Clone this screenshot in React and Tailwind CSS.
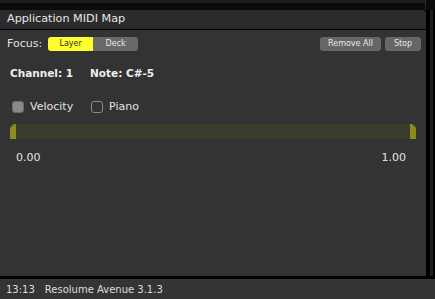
import React from 'react';

const Checkbox = ({ checked }) => (
  <span
    className={`w-[12px] h-[12px] rounded-[3px] border ${
      checked ? 'bg-[#8a8a8a] border-[#6c6c6c]' : 'bg-transparent border-[#8a8a8a]'
    }`}
  />
);

const Handle = ({ side }) => (
  <svg width="6" height="15" viewBox="0 0 6 15" className="block">
    {side === 'left' ? (
      <polygon points="0,4 4,0 6,0 6,15 0,15" fill="#8d8b1d" />
    ) : (
      <polygon points="0,0 2,0 6,4 6,15 0,15" fill="#8d8b1d" />
    )}
  </svg>
);

export default function App() {
  return (
    <div
      className="w-[435px] h-[299px] bg-[#0b0b0b] flex flex-col overflow-hidden text-[#e2e2e2]"
      style={{ fontFamily: '"DejaVu Sans", "Open Sans", sans-serif' }}
    >
      {/* top strip */}
      <div className="h-[10px] flex">
        <div className="w-[425px] h-[3px] bg-[#1d1d1d]" />
        <div className="w-[1px] h-[10px] bg-[#2a2a2a]" />
        <div className="flex-1" />
      </div>

      <div className="flex h-[266px]">
        {/* MIDI map panel */}
        <div className="w-[426px] flex flex-col">
          <div className="h-[20px] bg-[#2b2b2b] rounded-tr-[4px] flex items-center px-[7px] text-[11.2px] text-[#e6e6e6] border-b border-black">
            Application MIDI Map
          </div>
          <div className="flex-1 bg-[#333333] flex flex-col">
            {/* focus row */}
            <div className="flex items-center pl-[7px] pr-[5px] pt-[7px] h-[21px]">
              <span className="text-[11px] mr-[6px]">Focus:</span>
              <div className="flex h-[14px] rounded-[3px] overflow-hidden text-[8px]">
                <span className="w-[45px] bg-[#ffff2e] text-[#2a2a2a] flex items-center justify-center">Layer</span>
                <span className="w-[45px] bg-[#696969] text-[#e8e8e8] flex items-center justify-center">Deck</span>
              </div>
              <div className="flex-1" />
              <span className="w-[61px] h-[14px] rounded-[3px] bg-[#666666] text-[8px] text-[#e8e8e8] flex items-center justify-center">Remove All</span>
              <span className="w-[36px] h-[14px] rounded-[3px] bg-[#666666] text-[8px] text-[#e8e8e8] flex items-center justify-center ml-[4px]">Stop</span>
            </div>

            {/* channel / note */}
            <div className="flex items-center pl-[10px] mt-[16px] h-[14px] text-[10.5px] font-bold text-[#eeeeee]">
              <span className="w-[80px]">Channel: 1</span>
              <span>Note: C#-5</span>
            </div>

            {/* checkboxes */}
            <div className="flex items-center pl-[12px] mt-[19px] h-[14px] text-[11px]">
              <Checkbox checked />
              <span className="ml-[6px] w-[61px]">Velocity</span>
              <Checkbox />
              <span className="ml-[6px]">Piano</span>
            </div>

            {/* range slider */}
            <div className="mx-[10px] mt-[10px] h-[15px] bg-[#3c3c2d] flex justify-between">
              <Handle side="left" />
              <Handle side="right" />
            </div>

            <div className="flex justify-between pl-[16px] pr-[20px] mt-[11px] text-[11px]">
              <span>0.00</span>
              <span>1.00</span>
            </div>
          </div>
        </div>
        <div className="w-[4px] bg-black" />
        <div className="w-[3px] bg-[#1e1e1e]" />
        <div className="flex-1 bg-black" />
      </div>

      <div className="h-[3px] bg-black" />

      {/* status bar */}
      <div className="h-[20px] bg-[#343434] flex items-center px-[6px] text-[10px] text-[#dddddd]">
        <span>13:13</span>
        <span className="ml-[10px]">Resolume Avenue 3.1.3</span>
      </div>
    </div>
  );
}
